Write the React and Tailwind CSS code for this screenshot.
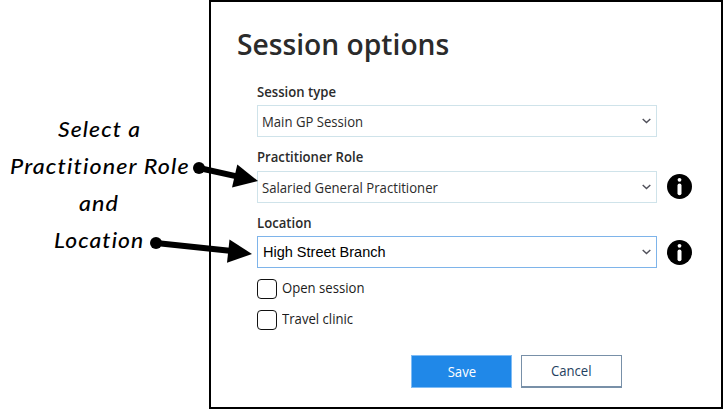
import React from "react";

const ui = "font-['Open_Sans','Noto_Sans',sans-serif]";

function Chevron() {
  return (
    <svg className="mr-[5px] shrink-0" width="9" height="6" viewBox="0 0 9 6" fill="none">
      <path d="M0.7 0.9 L4.5 4.6 L8.3 0.9" stroke="#50505a" strokeWidth="1.4" />
    </svg>
  );
}

function InfoIcon({ className }) {
  return (
    <svg className={`ml-[10px] shrink-0 ${className}`} width="25" height="25" viewBox="0 0 25 25">
      <circle cx="12.5" cy="12.5" r="12.5" fill="#000" />
      <circle cx="12.5" cy="5.8" r="1.9" fill="#fff" />
      <rect x="10.5" y="9.4" width="4" height="11.8" rx="2" fill="#fff" />
    </svg>
  );
}

function Field({ label, labelClass, boxClass, infoClass, children }) {
  return (
    <div className="flex flex-col">
      <label className={`flex text-[13.75px] font-semibold leading-5 text-[#2b2b2b] ${labelClass}`}>
        <span className="origin-left scale-x-[0.955]">{label}</span>
      </label>
      <div className="flex h-8 items-start">
        <div className={`flex h-8 w-[400px] shrink-0 items-center justify-between border ${boxClass}`}>
          {children}
          <Chevron />
        </div>
        {infoClass && <InfoIcon className={infoClass} />}
      </div>
    </div>
  );
}

function Value({ children }) {
  return (
    <span className="ml-1 w-max origin-left scale-x-[0.955] pt-[2px] text-[13.75px] text-[#2b2b2b]">{children}</span>
  );
}

function CheckRow({ children }) {
  return (
    <label className="flex h-5 items-center">
      <span className="size-5 shrink-0 rounded-[4px] border border-[#111] bg-white" />
      <span className="ml-[5px] origin-left scale-x-[0.955] pb-[2px]">{children}</span>
    </label>
  );
}

function Pointers() {
  return (
    <svg className="pointer-events-none absolute left-0 top-0" width="728" height="409" viewBox="0 0 728 409">
      <g stroke="#000" strokeWidth="6">
        <path d="M199 168 L238 176.6" />
        <path d="M156 243 L232 251" />
      </g>
      <circle cx="199" cy="168" r="6" />
      <circle cx="156" cy="243" r="6" />
      <path d="M258 181 L237.3 164.5 L232 187.5 Z" />
      <path d="M252 254 L229.5 239.5 L227 262.8 Z" />
    </svg>
  );
}

export default function App() {
  return (
    <div className={`relative flex h-[409px] w-[728px] overflow-hidden bg-white ${ui}`}>
      <aside className="flex w-[209px] shrink-0 flex-col pt-[110px] font-['Lato','Noto_Sans',sans-serif] text-[21px] font-medium italic leading-[37px] tracking-[1px] text-black">
        <span className="ml-[58px] w-max origin-left scale-x-[1.09]">Select a</span>
        <span className="ml-[10px] w-max origin-left scale-x-[1.11]">Practitioner Role</span>
        <span className="ml-[79px] w-max origin-left scale-x-[1.11]">and</span>
        <span className="ml-[54px] w-max origin-left scale-x-[1.09]">Location</span>
      </aside>
      <main className="flex h-[409px] w-[514px] shrink-0 flex-col border-2 border-black pl-[26px]">
        <h1 className="mt-[22px] h-10 w-max origin-left scale-x-[0.99] text-[28.5px] font-semibold leading-10 text-[#2b2b2b]">
          Session options
        </h1>
        <form className="flex flex-col pl-5">
          <Field label="Session type" labelClass="mt-[18px] h-[23px]" boxClass="border-[#cfe3ea]">
            <Value>Main GP Session</Value>
          </Field>
          <Field
            label="Practitioner Role"
            labelClass="mt-[10px] h-[24px]"
            boxClass="border-[#cfe3ea]"
            infoClass="mt-[3px]"
          >
            <Value>Salaried General Practitioner</Value>
          </Field>
          <Field label="Location" labelClass="mt-[10px] h-[23px]" boxClass="border-[#7eb4ea]" infoClass="mt-[4px]">
            <span className="ml-[5px] w-max pt-[2px] font-['Liberation_Sans',Arial,sans-serif] text-[14.5px] text-black">
              High Street Branch
            </span>
          </Field>
          <div className="mt-[11px] flex flex-col gap-[11px] text-[13.75px] text-[#1b1b1b]">
            <CheckRow>Open session</CheckRow>
            <CheckRow>Travel clinic</CheckRow>
          </div>
          <div className="ml-[154px] mt-[25px] flex gap-[9px] text-[13.75px]">
            <button type="button" className="h-[33px] w-[101px] border border-[#7fbcf5] bg-[#2088e8] text-white">
              <span className="inline-block scale-x-[0.955] pt-[2px]">Save</span>
            </button>
            <button
              type="button"
              className="h-[33px] w-[101px] border border-b-2 border-[#7890a8] bg-white text-[#1f3f60]"
            >
              <span className="inline-block scale-x-[0.955]">Cancel</span>
            </button>
          </div>
        </form>
      </main>
      <Pointers />
    </div>
  );
}
